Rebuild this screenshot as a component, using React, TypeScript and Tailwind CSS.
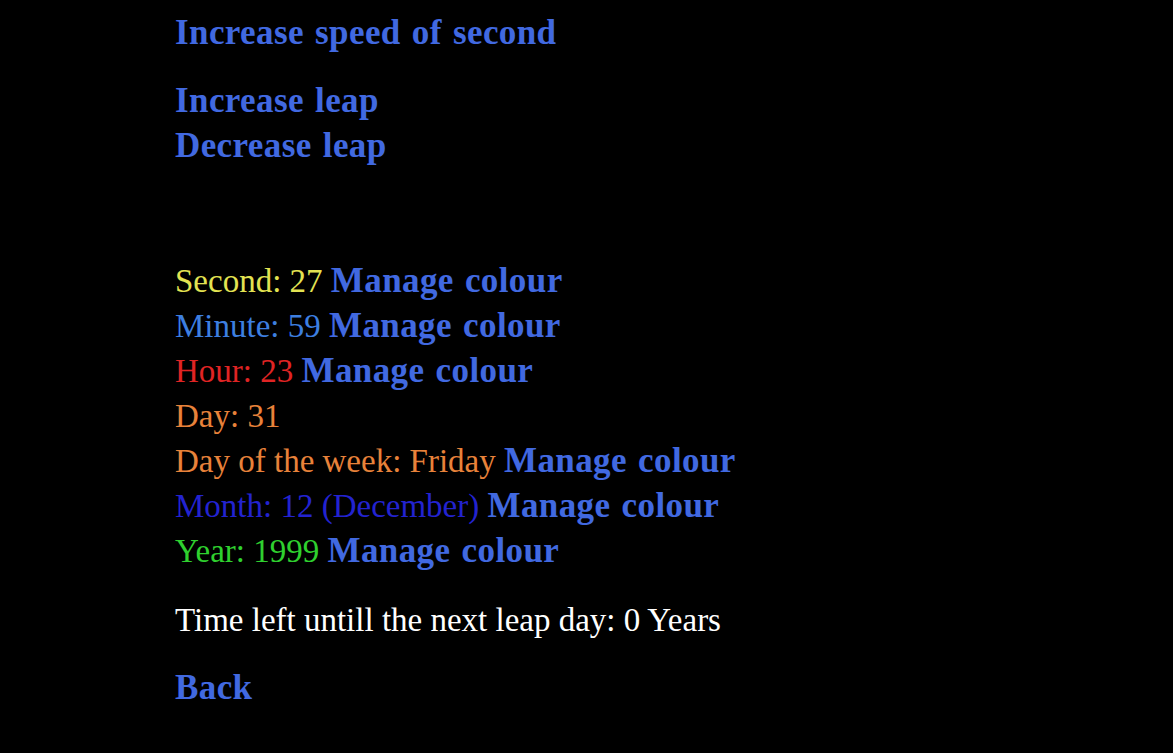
import React from "react"

const link = "font-bold text-[#4169e1] text-[35px] leading-none tracking-[0.4px] [word-spacing:2px]"

type Row = { label: string; value: string; color: string; manage: boolean }

const rows: Row[] = [
  { label: "Second:", value: "27", color: "text-[#e3e352]", manage: true },
  { label: "Minute:", value: "59", color: "text-[#3d7fe0]", manage: true },
  { label: "Hour:", value: "23", color: "text-[#e02424]", manage: true },
  { label: "Day:", value: "31", color: "text-[#e8823a]", manage: false },
  { label: "Day of the week:", value: "Friday", color: "text-[#e8823a]", manage: true },
  { label: "Month:", value: "12 (December)", color: "text-[#2323d0]", manage: true },
  { label: "Year:", value: "1999", color: "text-[#2fd02f]", manage: true },
]

export default function App() {
  return (
    <div
      className="min-h-screen bg-black pl-[175px] pt-[11px] text-[33px] leading-[45px] text-white"
      style={{ fontFamily: '"Liberation Serif", "Times New Roman", serif' }}
    >
      <div>
        <a className={link}>Increase speed of second</a>
      </div>
      <div className="mt-[23px]">
        <a className={link}>Increase leap</a>
      </div>
      <div>
        <a className={link}>Decrease leap</a>
      </div>

      <div className="mt-[90px]">
        {rows.map((r) => (
          <div key={r.label}>
            <span className={r.color}>
              {r.label} {r.value}
            </span>
            {r.manage && (
              <>
                {" "}
                <a className={link}>Manage colour</a>
              </>
            )}
          </div>
        ))}
      </div>

      <div className="mt-[24px]">Time left untill the next leap day: 0 Years</div>
      <div className="mt-[23px]">
        <a className={link}>Back</a>
      </div>
    </div>
  )
}
